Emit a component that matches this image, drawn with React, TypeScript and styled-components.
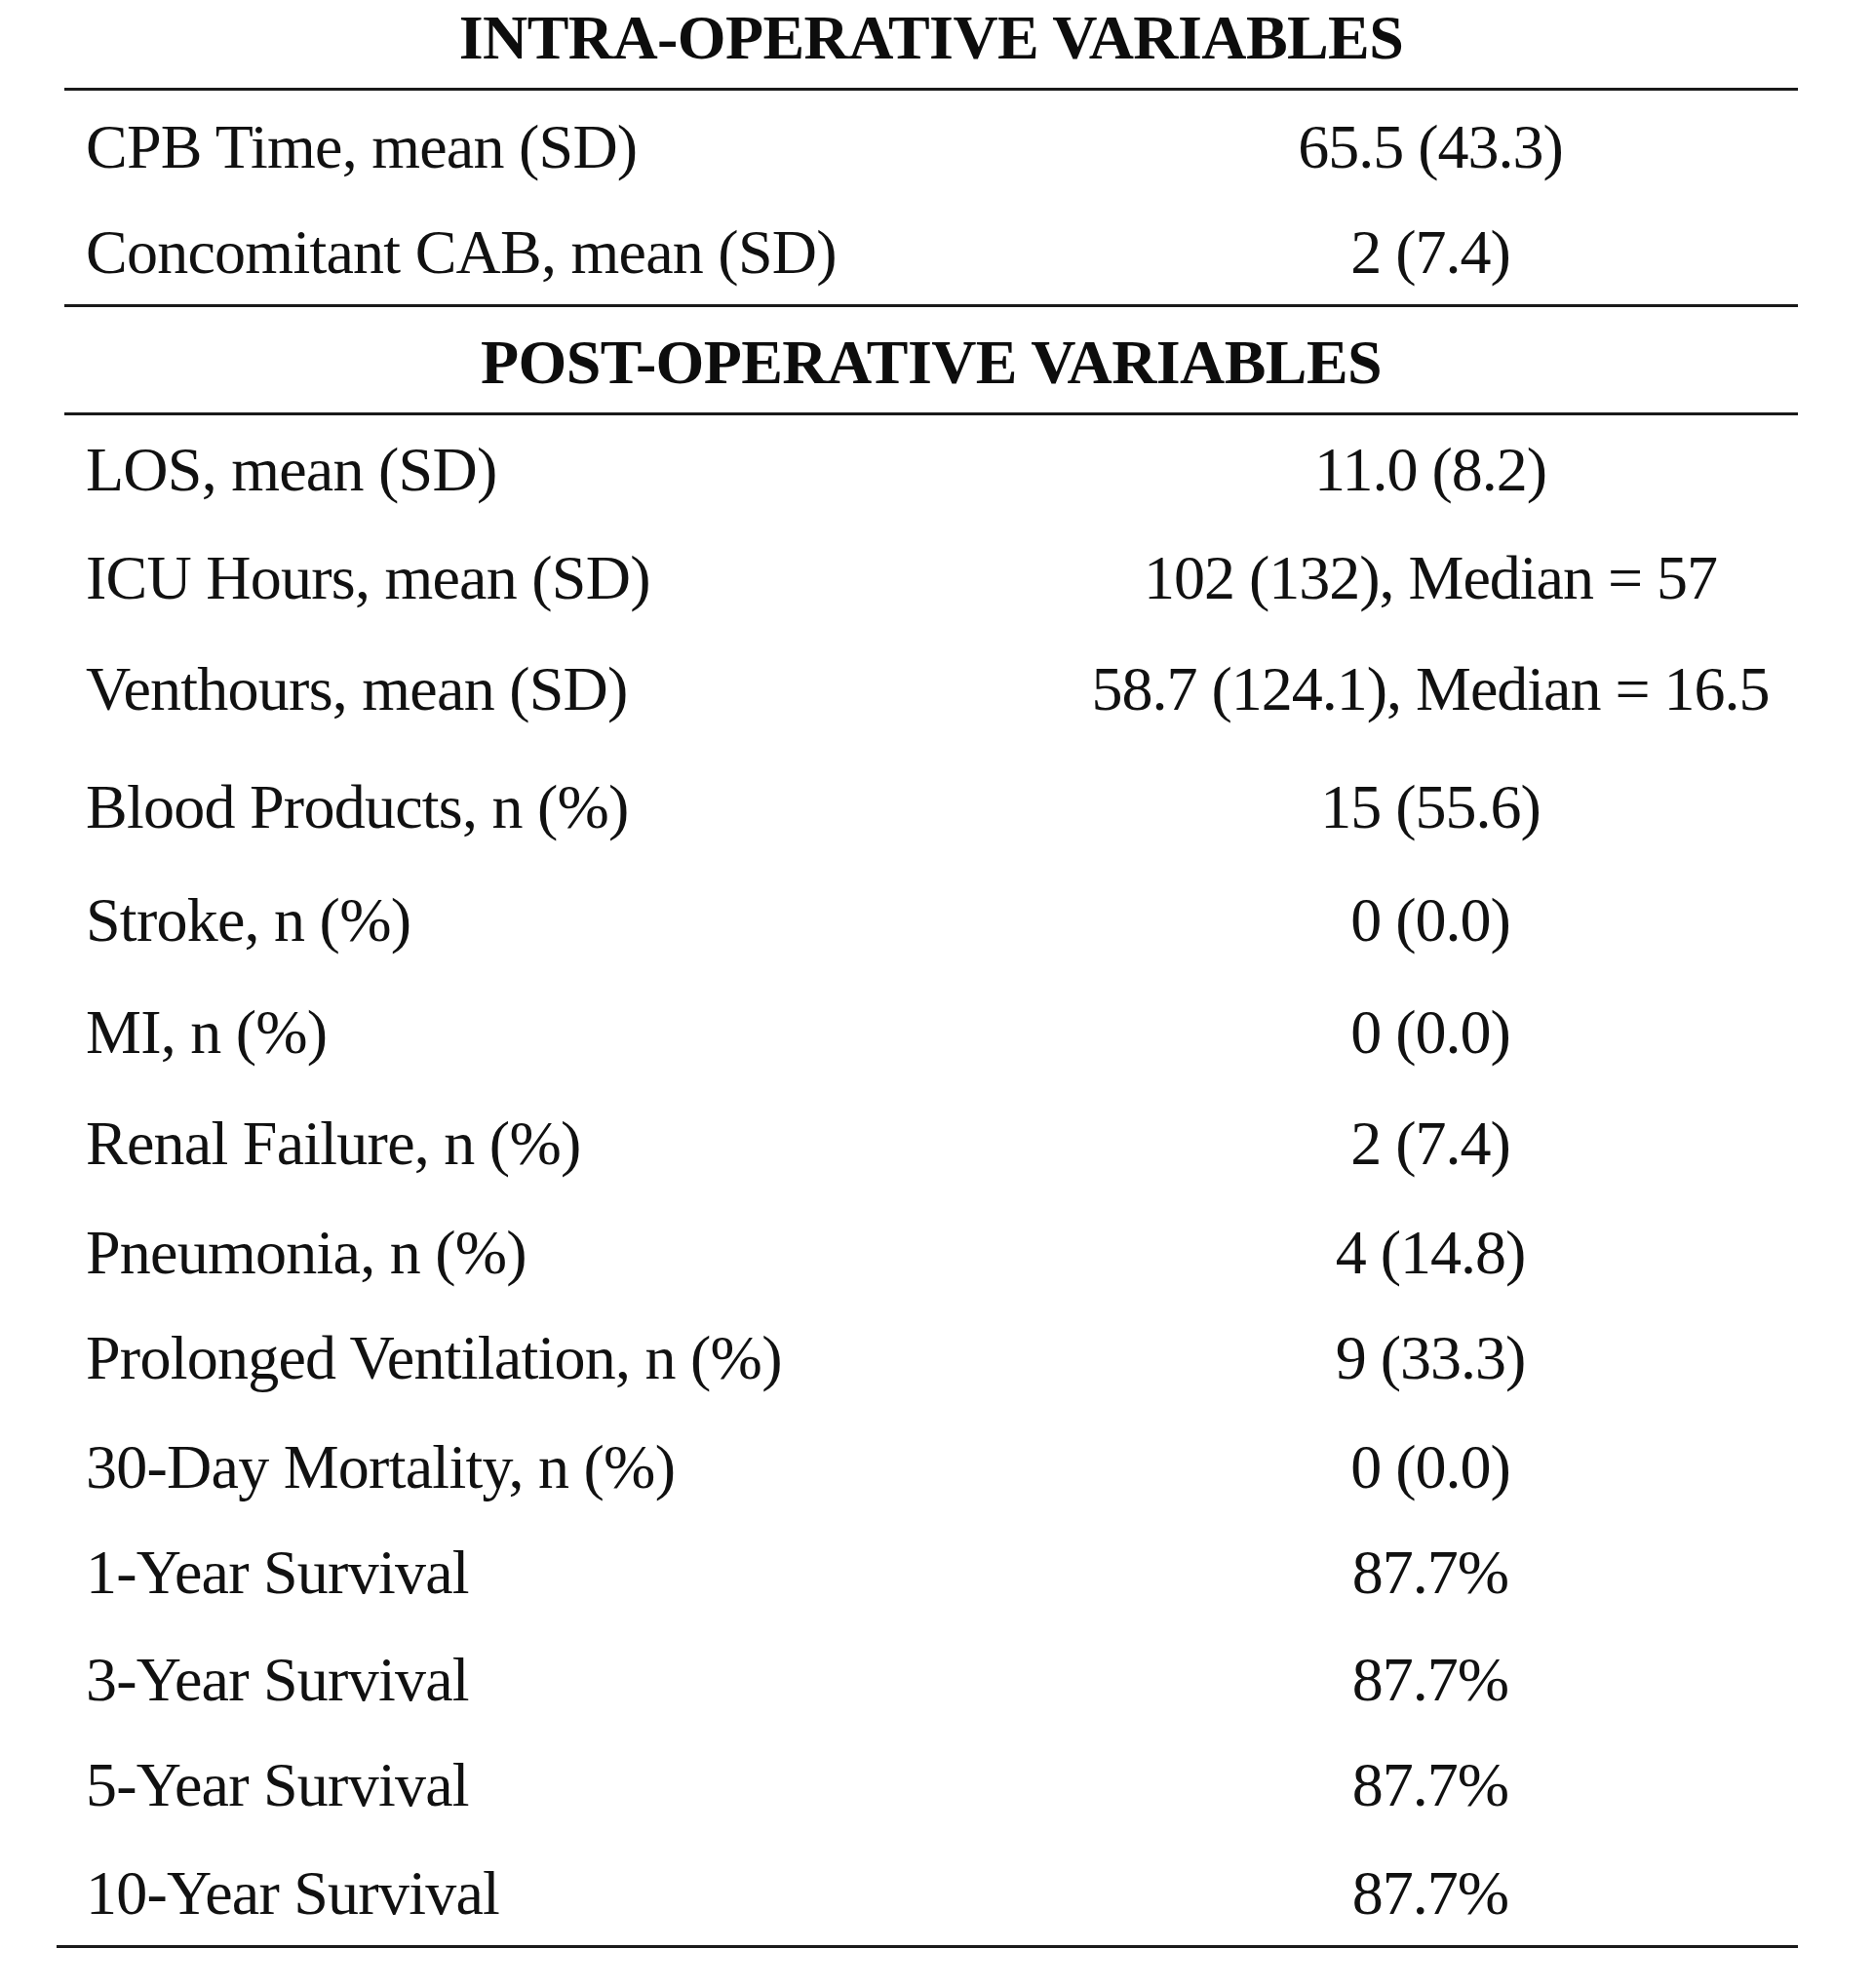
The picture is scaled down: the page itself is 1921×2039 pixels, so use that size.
import React from "react";
import styled, { createGlobalStyle } from "styled-components";

const GlobalStyle = createGlobalStyle`
  html, body {
    margin: 0;
    padding: 0;
    background: #ffffff;
  }
  body {
    font-family: "Liberation Serif", "Times New Roman", serif;
    color: #111111;
  }
`;

const Page = styled.div`
  width: 1778px;
  padding-left: 66px;
`;

const Section = styled.section`
  display: flex;
  flex-direction: column;
`;

const SectionTitle = styled.h2<{ $padTop: number }>`
  margin: 0;
  padding: ${(p) => p.$padTop}px 0 16px;
  font-size: 64px;
  line-height: 70px;
  font-weight: 700;
  letter-spacing: -0.6px;
  text-align: center;
  color: #0d0d0d;
`;

const Rule = styled.div<{ $extendLeft?: number }>`
  height: 3px;
  background: #1a1a1a;
  margin-left: ${(p) => -(p.$extendLeft ?? 0)}px;
`;

const Rows = styled.div<{ $padTop: number }>`
  display: flex;
  flex-direction: column;
  padding-top: ${(p) => p.$padTop}px;
`;

const Row = styled.div<{ $h: number }>`
  display: grid;
  grid-template-columns: 1024px 754px;
  height: ${(p) => p.$h}px;
  box-sizing: border-box;
  padding-top: 21px;
  font-size: 64px;
  line-height: 70px;
`;

const Label = styled.div`
  padding-left: 22px;
  white-space: nowrap;
  letter-spacing: -0.75px;
`;

const Value = styled.div`
  text-align: center;
  white-space: nowrap;
  letter-spacing: -1px;
`;

type Item = { label: string; value: string; h: number };

const intra: Item[] = [
  { label: "CPB Time, mean (SD)", value: "65.5 (43.3)", h: 108 },
  { label: "Concomitant CAB, mean (SD)", value: "2 (7.4)", h: 109 },
];

const post: Item[] = [
  { label: "LOS, mean (SD)", value: "11.0 (8.2)", h: 111 },
  { label: "ICU Hours, mean (SD)", value: "102 (132), Median = 57", h: 114 },
  { label: "Venthours, mean (SD)", value: "58.7 (124.1), Median = 16.5", h: 121 },
  { label: "Blood Products, n (%)", value: "15 (55.6)", h: 116 },
  { label: "Stroke, n (%)", value: "0 (0.0)", h: 115 },
  { label: "MI, n (%)", value: "0 (0.0)", h: 114 },
  { label: "Renal Failure, n (%)", value: "2 (7.4)", h: 112 },
  { label: "Pneumonia, n (%)", value: "4 (14.8)", h: 108 },
  { label: "Prolonged Ventilation, n (%)", value: "9 (33.3)", h: 112 },
  { label: "30-Day Mortality, n (%)", value: "0 (0.0)", h: 108 },
  { label: "1-Year Survival", value: "87.7%", h: 110 },
  { label: "3-Year Survival", value: "87.7%", h: 108 },
  { label: "5-Year Survival", value: "87.7%", h: 111 },
  { label: "10-Year Survival", value: "87.7%", h: 109 },
];

export default function App() {
  return (
    <>
      <GlobalStyle />
      <Page>
        <Section>
          <SectionTitle $padTop={4}>INTRA-OPERATIVE VARIABLES</SectionTitle>
          <Rule />
          <Rows $padTop={2}>
            {intra.map((r) => (
              <Row key={r.label} $h={r.h}>
                <Label>{r.label}</Label>
                <Value>{r.value}</Value>
              </Row>
            ))}
          </Rows>
          <Rule />
        </Section>
        <Section>
          <SectionTitle $padTop={22}>POST-OPERATIVE VARIABLES</SectionTitle>
          <Rule />
          <Rows $padTop={0}>
            {post.map((r) => (
              <Row key={r.label} $h={r.h}>
                <Label>{r.label}</Label>
                <Value>{r.value}</Value>
              </Row>
            ))}
          </Rows>
          <Rule $extendLeft={8} />
        </Section>
      </Page>
    </>
  );
}
